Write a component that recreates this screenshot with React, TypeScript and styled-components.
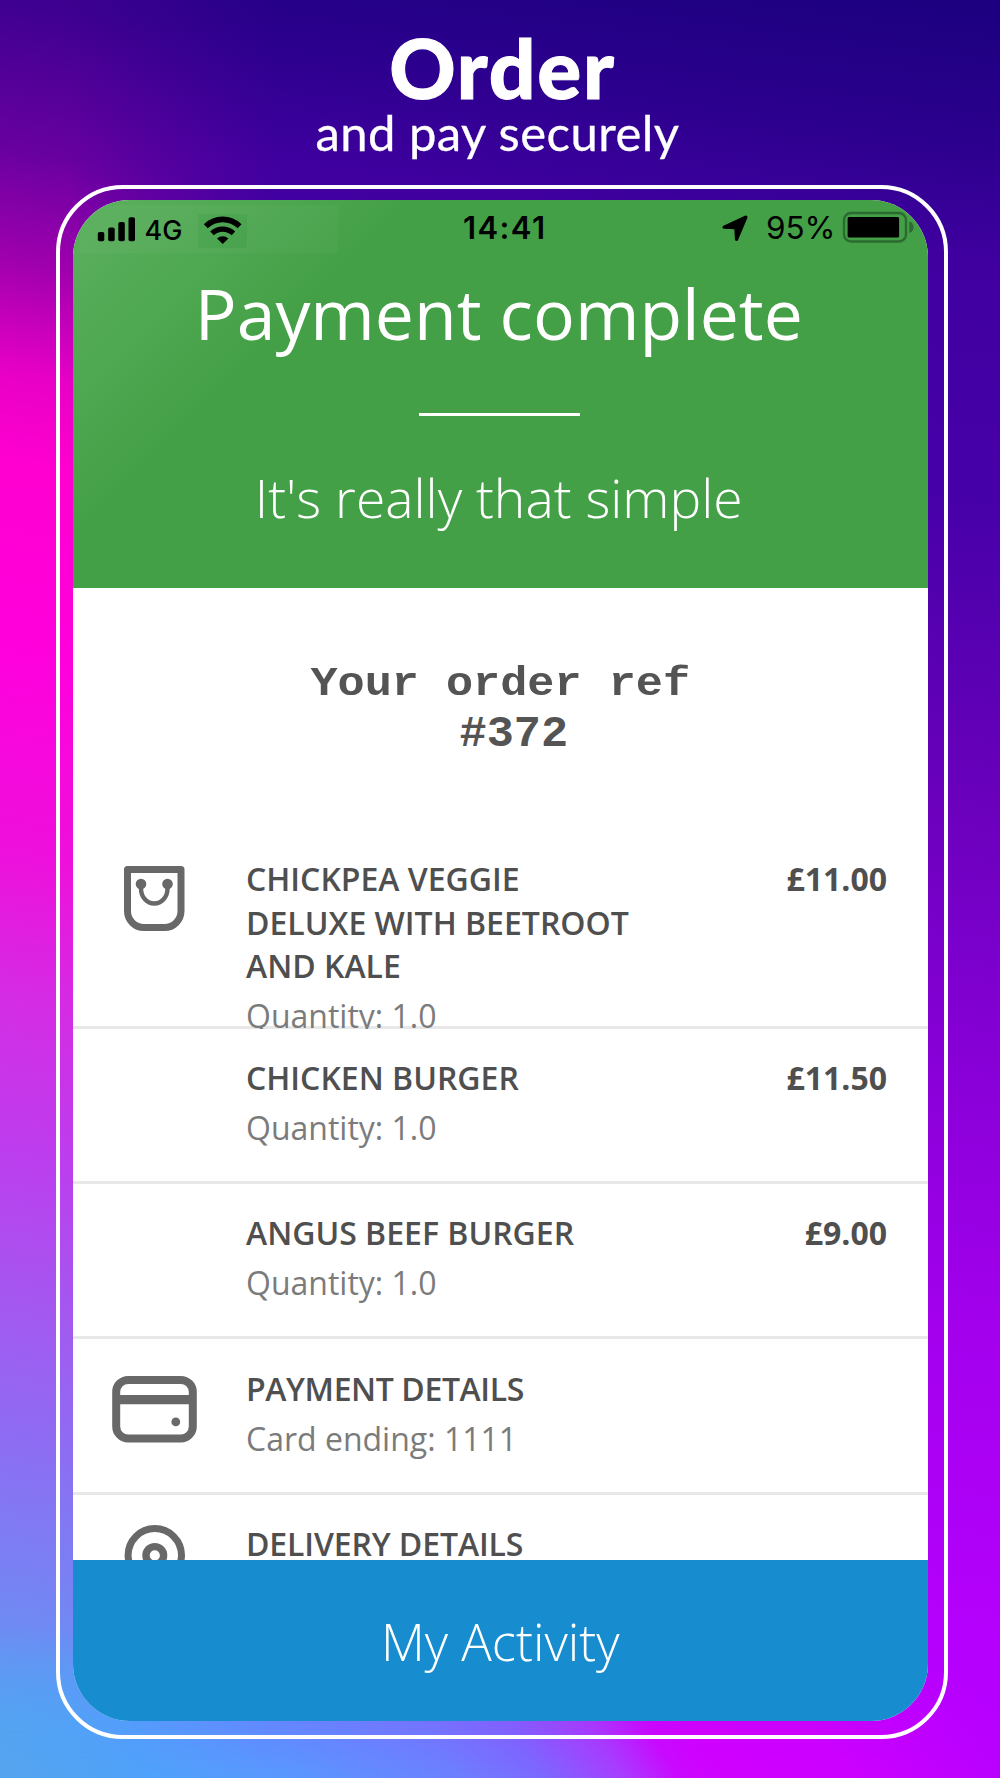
import React from 'react';
import styled, { createGlobalStyle } from 'styled-components';

const GlobalStyle = createGlobalStyle`
  *, *::before, *::after { box-sizing: border-box; }
  html, body { margin: 0; padding: 0; }
`;

const Page = styled.main`
  position: relative;
  isolation: isolate;
  width: 1000px;
  height: 1778px;
  overflow: hidden;
  display: flex;
  flex-direction: column;
  font-family: 'Open Sans', sans-serif;
  background: linear-gradient(
    188deg,
    #1b007f 0%,
    #2a008c 7%,
    #4000a0 14%,
    #4600a8 26%,
    #6a00bc 42%,
    #8400d4 54%,
    #a400ee 70%,
    #b400fc 85%,
    #b900ff 100%
  );

  &::before {
    content: '';
    position: absolute;
    inset: 0;
    z-index: -1;
    background: linear-gradient(
      190deg,
      #2c0088 0%,
      #3e0090 9%,
      #6800a0 16.5%,
      #a000ae 22.3%,
      #e800c6 28%,
      #ff00d0 32.5%,
      #ff00dc 42%,
      #ee10dc 52.5%,
      #d42ce4 60%,
      #bc3eee 68%,
      #a458f0 75.6%,
      #8c6ef3 83%,
      #7a80f3 89%,
      #6a90f3 93.5%,
      #54a4ef 100%
    );
    mask-image: linear-gradient(to right, #000 0%, #000 7%, transparent 28%);
  }

  &::after {
    content: '';
    position: absolute;
    left: 0;
    right: 0;
    bottom: 0;
    height: 150px;
    z-index: -1;
    background: linear-gradient(
      60deg,
      #55a4ee 0%,
      #4fa2fb 14%,
      #5a96ff 28%,
      #6c80ff 42%,
      #7c68ff 50%,
      #a83cff 57.5%,
      #ca08ff 62.5%,
      #d000ff 67%,
      #cc00ff 78%,
      #b800ff 93%,
      #b600ff 100%
    );
    mask-image: linear-gradient(to top, #000 0%, rgba(0, 0, 0, 0.9) 38%, transparent 100%);
  }
`;

const Headline = styled.header`
  height: 185px;
  flex: none;
  display: flex;
  flex-direction: column;
  align-items: center;
  padding-top: 25px;
  color: #fff;
  font-family: Lato, sans-serif;
`;

const HeadlineTitle = styled.h1`
  margin: 0;
  font-size: 82px;
  line-height: 84px;
  font-weight: 900;
  letter-spacing: 1.8px;
  padding-left: 5px;
  -webkit-text-stroke: 1px #fff;
`;

const HeadlineText = styled.p`
  margin: 0;
  margin-top: -2px;
  font-size: 49px;
  line-height: 50px;
  letter-spacing: 0.45px;
  padding-right: 5px;
  -webkit-text-stroke: 0.3px #fff;
`;

const Frame = styled.div`
  flex: none;
  width: 892px;
  height: 1554px;
  margin-left: 56px;
  padding: 11px 16px 14px 12.5px;
  border: 4px solid #fff;
  border-radius: 67px;
`;

const Screen = styled.section`
  width: 100%;
  height: 100%;
  border-radius: 57px;
  overflow: hidden;
  background: #fff;
  display: flex;
  flex-direction: column;
`;

const Banner = styled.div`
  height: 388px;
  flex: none;
  display: flex;
  flex-direction: column;
  align-items: center;
  color: #fff;
  background: linear-gradient(135deg, #5cb05f 0%, #4fa852 15%, #44a047 27%);
`;

const StatusBar = styled.div`
  align-self: stretch;
  height: 58px;
  flex: none;
  display: grid;
  grid-template-columns: 1fr auto 1fr;
  color: #000;
  font-family: Inter, sans-serif;
`;

const Carrier = styled.div`
  display: flex;
  align-items: flex-start;
  width: 258px;
  height: 48px;
  margin: 5px 0 0 7px;
  padding-left: 17px;
  background: rgba(255, 255, 255, 0.03);

  svg { flex: none; }
`;

const Network = styled.span`
  margin: 9px 0 0 10px;
  width: 53px;
  font-size: 27px;
  line-height: 34px;
  font-weight: 500;
`;

const WifiBox = styled.span`
  margin-top: 9px;
  width: 49px;
  height: 34px;
  background: rgba(40, 140, 50, 0.16);
`;

const Clock = styled.span`
  padding: 9px 0 0 9px;
  font-size: 31px;
  line-height: 38px;
  font-weight: 600;
  letter-spacing: 1.4px;
`;

const Power = styled.div`
  display: flex;
  justify-content: flex-end;
  padding-right: 14.5px;

  svg { flex: none; }
`;

const Charge = styled.span`
  padding-top: 9px;
  margin: 0 6px 0 17.5px;
  font-size: 31.5px;
  line-height: 38px;
`;

const BannerTitle = styled.h2`
  margin: 7px 3px 0 0;
  font-size: 69.7px;
  line-height: 97px;
  font-weight: 400;
`;

const Rule = styled.div`
  width: 161px;
  height: 3px;
  margin-top: 51px;
  margin-right: 1px;
  background: #fff;
`;

const BannerText = styled.p`
  margin: 45px 3px 0 0;
  font-size: 53.4px;
  line-height: 74px;
  font-weight: 300;
`;

const OrderRef = styled.div`
  flex: none;
  height: 242px;
  padding-top: 70px;
  text-align: center;
  white-space: pre;
  font-family: 'Liberation Mono', monospace;
  font-weight: 700;
  font-size: 45.2px;
  line-height: 51px;
  color: #545454;
`;

const RefLabel = styled.div`
  transform: scaleY(0.88);
  transform-origin: 50% 37.6px;
`;

const RefNumber = styled.div`
  letter-spacing: 0;
`;

const List = styled.div`
  flex: 1;
  min-height: 0;
  overflow: hidden;
`;

const Row = styled.article<{ $height: number }>`
  display: grid;
  grid-template-columns: 163.5px 405px 1fr;
  height: ${(p) => p.$height}px;
  padding: 27.3px 41px 0 0;
  overflow: hidden;
  box-shadow: inset 0 -3px #e8e8e8;
`;

const IconCell = styled.div`
  display: flex;
  justify-content: center;
  align-items: flex-start;
`;

const RowBody = styled.div`
  padding-left: 10px;
`;

const RowTitle = styled.h3<{ $tracking?: number }>`
  margin: 0;
  font-size: 32px;
  line-height: 43.6px;
  font-weight: 600;
  letter-spacing: ${(p) => p.$tracking ?? 0}px;
  color: #4f4f4f;
`;

const RowNote = styled.p`
  margin: 6.4px 0 0;
  font-size: 32px;
  line-height: 43.6px;
  color: #7b7b7b;
`;

const Price = styled.span`
  text-align: right;
  font-size: 32px;
  line-height: 43.6px;
  font-weight: 700;
  color: #4f4f4f;
`;

const ActivityButton = styled.button`
  flex: none;
  height: 161px;
  border: 0;
  padding: 1px 0 0;
  background: #178dcf;
  color: #fff;
  font-family: 'Open Sans', sans-serif;
  font-size: 50.8px;
  font-weight: 300;
`;

const ICON = '#686868';

const SignalIcon = () => (
  <svg width="38" height="48" viewBox="97 205 38 48">
    <rect x="97.8" y="232" width="6.5" height="9.3" rx="1.8" />
    <rect x="108.2" y="227.5" width="6.5" height="13.8" rx="1.8" />
    <rect x="118.3" y="222" width="6.5" height="19.3" rx="1.8" />
    <rect x="128.5" y="217.3" width="6.5" height="24" rx="1.8" />
  </svg>
);

const WifiIcon = () => (
  <svg width="49" height="34" viewBox="198 214 49 34">
    <g fill="none" stroke="#000">
      <path d="M205.8 226.3a24.2 24.2 0 0 1 33.8 0" strokeWidth="5.6" />
      <path d="M212 233.4a15.6 15.6 0 0 1 21.4 0" strokeWidth="5.2" />
    </g>
    <path d="M217 238.4a8.6 8.6 0 0 1 11.4 0l-5.7 5.7z" />
  </svg>
);

const LocationIcon = () => (
  <svg width="26" height="58" viewBox="723 199.5 26 58">
    <path
      d="M746.2 216 724.8 225.8c-1 .5-.8 1.7.3 1.8l10.9.5.6 10.7c.1 1.2 1.4 1.3 1.9.3l9.2-21.800c.5-1.200-.4-1.800-1.500-1.300z"
      stroke="#000"
      strokeWidth="1.4"
      strokeLinejoin="round"
    />
  </svg>
);

const BatteryIcon = () => (
  <svg width="72" height="58" viewBox="842 200 72 58">
    <rect x="844" y="213" width="62" height="28.5" rx="7" fill="none" stroke="#2b6a30" strokeWidth="2.4" />
    <rect x="847.6" y="216.9" width="51.5" height="20.7" rx="1.5" />
    <path d="M909.3 221.5c3 .8 4.2 3 4.2 5.7s-1.200 4.900-4.200 5.700z" fill="#2b6a30" />
  </svg>
);

const BagIcon = () => (
  <svg width="61" height="76" viewBox="124 857 61 76">
    <path d="M127.5 869.500h53.500V911a16.500 16.500 0 0 1-16.500 16.500h-20.500A16.500 16.500 0 0 1 127.500 911z" fill="none" stroke={ICON} strokeWidth="7" strokeLinejoin="round" />
    <path d="M141 884v5a12.400 13.500 0 0 0 26.500 0v-5" fill="none" stroke={ICON} strokeWidth="4.4" />
    <circle cx="141" cy="884" r="5.3" fill={ICON} />
    <circle cx="167.5" cy="884" r="5.3" fill={ICON} />
  </svg>
);

const CardIcon = () => (
  <svg width="85" height="88" viewBox="112.5 1366.4 85 88">
    <rect x="116.7" y="1379.3" width="76.6" height="58.6" rx="12" fill="none" stroke={ICON} strokeWidth="8" />
    <path d="M118 1399h75" stroke={ICON} strokeWidth="9.3" />
    <circle cx="176.3" cy="1421.3" r="4.4" fill={ICON} />
  </svg>
);

const PinIcon = () => (
  <svg width="61" height="76" viewBox="125 1521.6 61 76">
    <path d="M155.8 1528.200a26.700 26.700 0 0 0-26.700 26.700c0 13 12 26 26.700 38 14.700-12 26.700-25 26.700-38a26.700 26.700 0 0 0-26.700-26.700z" fill="none" stroke={ICON} strokeWidth="7" />
    <circle cx="155.8" cy="1555" r="8.8" fill="none" stroke={ICON} strokeWidth="7.4" />
  </svg>
);

type Entry = {
  title: string;
  note: string;
  price?: string;
  icon?: React.ReactNode;
  height: number;
  tracking?: number;
};

const entries: Entry[] = [
  { title: 'CHICKPEA VEGGIE DELUXE WITH BEETROOT AND KALE', note: 'Quantity: 1.0', price: '£11.00', icon: <BagIcon />, height: 199 },
  { title: 'CHICKEN BURGER', note: 'Quantity: 1.0', price: '£11.50', height: 155.2 },
  { title: 'ANGUS BEEF BURGER', note: 'Quantity: 1.0', price: '£9.00', height: 155.2 },
  { title: 'PAYMENT DETAILS', note: 'Card ending: 1111', icon: <CardIcon />, height: 155.2, tracking: -0.4 },
  { title: 'DELIVERY DETAILS', note: '', icon: <PinIcon />, height: 155.2, tracking: -0.12 },
];

export default function App() {
  return (
    <Page>
      <GlobalStyle />
      <Headline>
        <HeadlineTitle>Order</HeadlineTitle>
        <HeadlineText>and pay securely</HeadlineText>
      </Headline>
      <Frame>
        <Screen>
          <Banner>
            <StatusBar>
              <Carrier>
                <SignalIcon />
                <Network>4G</Network>
                <WifiBox><WifiIcon /></WifiBox>
              </Carrier>
              <Clock>14:41</Clock>
              <Power>
                <LocationIcon />
                <Charge>95%</Charge>
                <BatteryIcon />
              </Power>
            </StatusBar>
            <BannerTitle>Payment complete</BannerTitle>
            <Rule />
            <BannerText>It's really that simple</BannerText>
          </Banner>
          <OrderRef>
            <RefLabel>Your order ref</RefLabel>
            <RefNumber>{'\u00a0#372'}</RefNumber>
          </OrderRef>
          <List>
            {entries.map((e) => (
              <Row key={e.title} $height={e.height}>
                <IconCell>{e.icon}</IconCell>
                <RowBody>
                  <RowTitle $tracking={e.tracking}>{e.title}</RowTitle>
                  {e.note && <RowNote>{e.note}</RowNote>}
                </RowBody>
                {e.price && <Price>{e.price}</Price>}
              </Row>
            ))}
          </List>
          <ActivityButton>My Activity</ActivityButton>
        </Screen>
      </Frame>
    </Page>
  );
}
